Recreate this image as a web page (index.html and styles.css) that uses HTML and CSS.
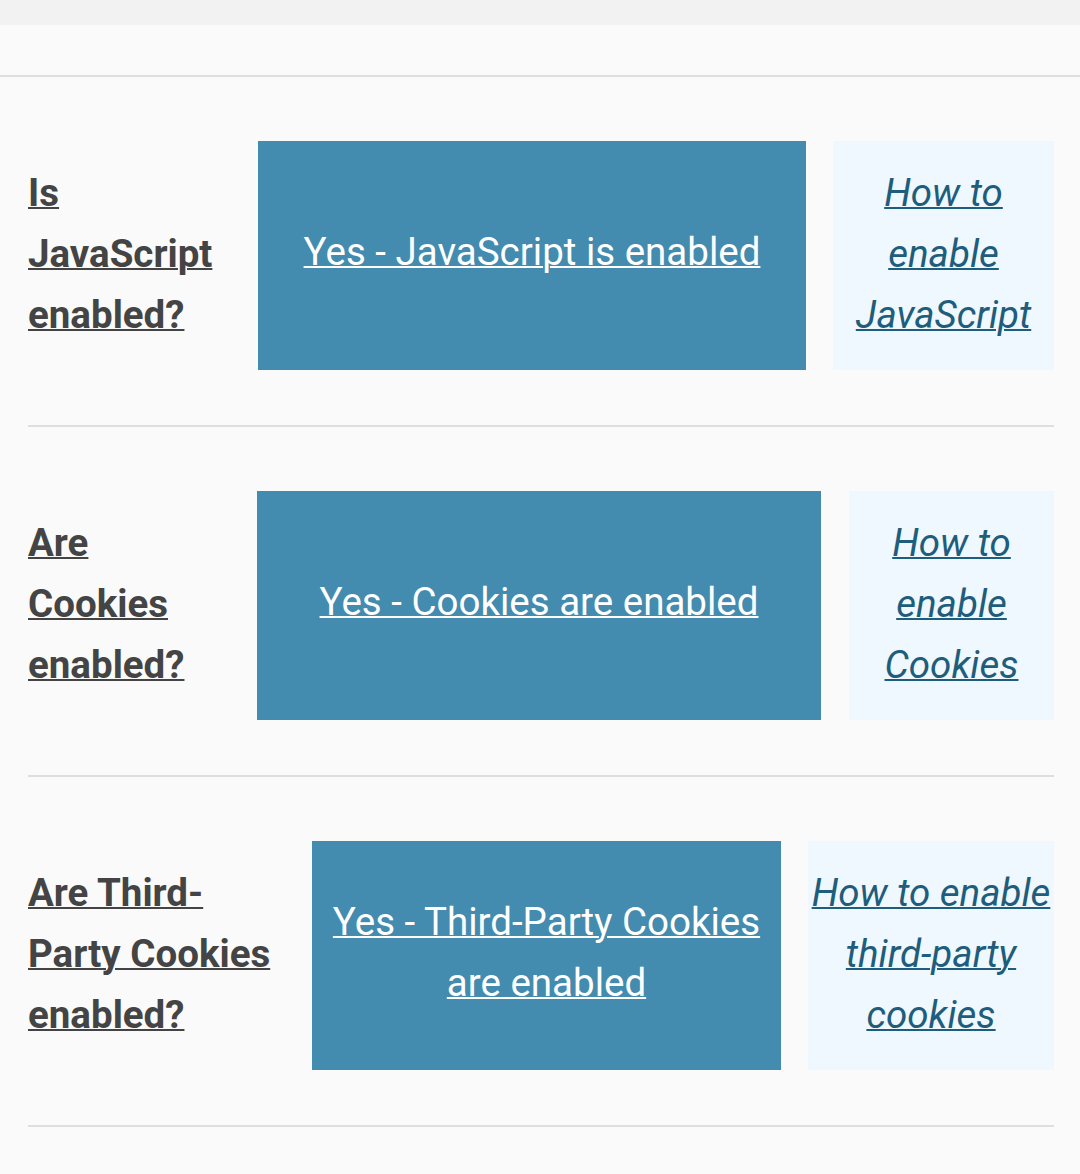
FILE: index.html
```html
<!DOCTYPE html>
<html lang="en">
<head>
  <meta charset="UTF-8">
  <title>Browser check</title>
  <link rel="stylesheet" href="styles.css">
</head>
<body>

<div class="topbar"></div>
<div class="header"></div>

<div class="checks">
  <div class="check check-js">
    <div class="question"><a href="#">Is JavaScript enabled?</a></div>
    <div class="result"><a href="#">Yes - JavaScript is enabled</a></div>
    <div class="howto"><a href="#">How to enable JavaScript</a></div>
  </div>

  <div class="check check-cookies">
    <div class="question"><a href="#">Are Cookies enabled?</a></div>
    <div class="result"><a href="#">Yes - Cookies are enabled</a></div>
    <div class="howto"><a href="#">How to enable Cookies</a></div>
  </div>

  <div class="check check-third">
    <div class="question"><a href="#">Are Third-Party Cookies enabled?</a></div>
    <div class="result"><a href="#">Yes - Third-Party Cookies are enabled</a></div>
    <div class="howto"><a href="#">How to enable third-party cookies</a></div>
  </div>
</div>

</body>
</html>
```

FILE: styles.css
```css
body {
  margin: 0;
  background: #fafafa;
  font-family: Roboto, "Noto Sans", sans-serif;
  font-size: 38.5px;
  line-height: 61px;
}

.topbar {
  height: 25px;
  background: #f2f2f2;
}

.header {
  height: 50px;
  border-bottom: 2px solid #dedede;
}

.checks {
  padding: 0 26px 0 28px;
}

.check {
  display: grid;
  align-items: stretch;
  gap: 27px;
  padding: 64px 0 55px;
  border-bottom: 2px solid #dedede;
}

.check-js {
  grid-template-columns: 203px 548px 221px;
}

.check-cookies {
  grid-template-columns: 201px 564px 205px;
  column-gap: 28px;
}

.check-third {
  grid-template-columns: 257px 469px 246px;
}

.question {
  align-self: center;
  padding-bottom: 4px;
}

.question a {
  color: #444;
  font-weight: bold;
  text-decoration-thickness: 2px;
}

.result,
.howto {
  display: flex;
  align-items: center;
  justify-content: center;
  text-align: center;
}

.result {
  background: #438baf;
  padding: 19px 18px 27px;
}

.result a {
  color: #fff;
  text-decoration-thickness: 2px;
}

.howto {
  background: #eff7ff;
  padding: 21px 0 25px;
}

.howto a {
  color: #1e5d7b;
  font-style: italic;
  text-decoration-thickness: 2px;
}
```
